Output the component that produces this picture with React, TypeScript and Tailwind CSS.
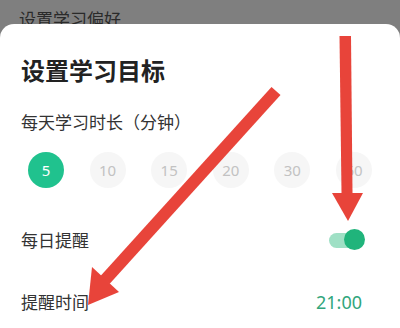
const durations = [5, 10, 15, 20, 30, 60];

function Arrows() {
  return (
    <svg className="absolute inset-0 pointer-events-none" width="400" height="328" viewBox="0 0 400 328">
      <polygon points="339.5,36 351,36 352.5,193 341.5,193" fill="#e8443a" />
      <polygon points="332,193 363,193 348,221" fill="#e8443a" />
      <polygon points="271.5,87 280.5,95 109.5,284 100.5,276" fill="#e8443a" />
      <polygon points="92,267 119,292 88,305" fill="#e8443a" />
    </svg>
  );
}

export default function App() {
  return (
    <div
      className="relative w-[400px] h-[328px] overflow-hidden bg-[#7f7f7f]"
      style={{ fontFamily: '"Noto Sans", "Noto Sans CJK SC", sans-serif' }}
    >
      <div className="h-[24px] overflow-hidden pl-[19px] pt-[10px] text-[17px] leading-none text-[#2a2a2a]" style={{ fontFamily: '"Noto Sans CJK SC", sans-serif' }}>
        设置学习偏好
      </div>

      <div className="h-[304px] rounded-t-[14px] bg-white px-[21px]" style={{ fontFamily: '"Noto Sans CJK SC", sans-serif' }}>
        <h1 className="pt-[30px] text-[24px] leading-[32px] font-bold text-[#222]">设置学习目标</h1>

        <p className="mt-[24px] text-[17px] leading-[24px] text-[#333]">每天学习时长（分钟）</p>

        <div className="mt-[18px] ml-[7px] w-[344px] flex justify-between">
          {durations.map((d, i) => (
            <div
              key={d}
              className={
                i === 0
                  ? "w-[36px] h-[36px] rounded-full bg-[#20c28e] text-white flex items-center justify-center text-[15px]"
                  : "w-[36px] h-[36px] rounded-full bg-[#f6f6f6] text-[#c2c2c2] flex items-center justify-center text-[15px]"
              }
              style={{ fontFamily: '"Noto Sans", sans-serif' }}
            >
              {d}
            </div>
          ))}
        </div>

        <div className="mt-[38px] h-[28px] pr-[14px] flex items-center justify-between">
          <span className="text-[17px] text-[#333]">每日提醒</span>
          <div className="relative w-[36px] h-[22px] flex items-center">
            <div className="w-[30px] h-[15px] rounded-full bg-[#9fe0c5]" />
            <div className="absolute right-0 top-0 w-[21px] h-[21px] rounded-full bg-[#20b47b]" />
          </div>
        </div>

        <div className="mt-[34px] h-[28px] pr-[17px] flex items-center justify-between">
          <span className="text-[17px] text-[#333]">提醒时间</span>
          <span className="text-[18px] text-[#31a67c]" style={{ fontFamily: '"Noto Sans", sans-serif' }}>21:00</span>
        </div>
      </div>

      <Arrows />
    </div>
  );
}
